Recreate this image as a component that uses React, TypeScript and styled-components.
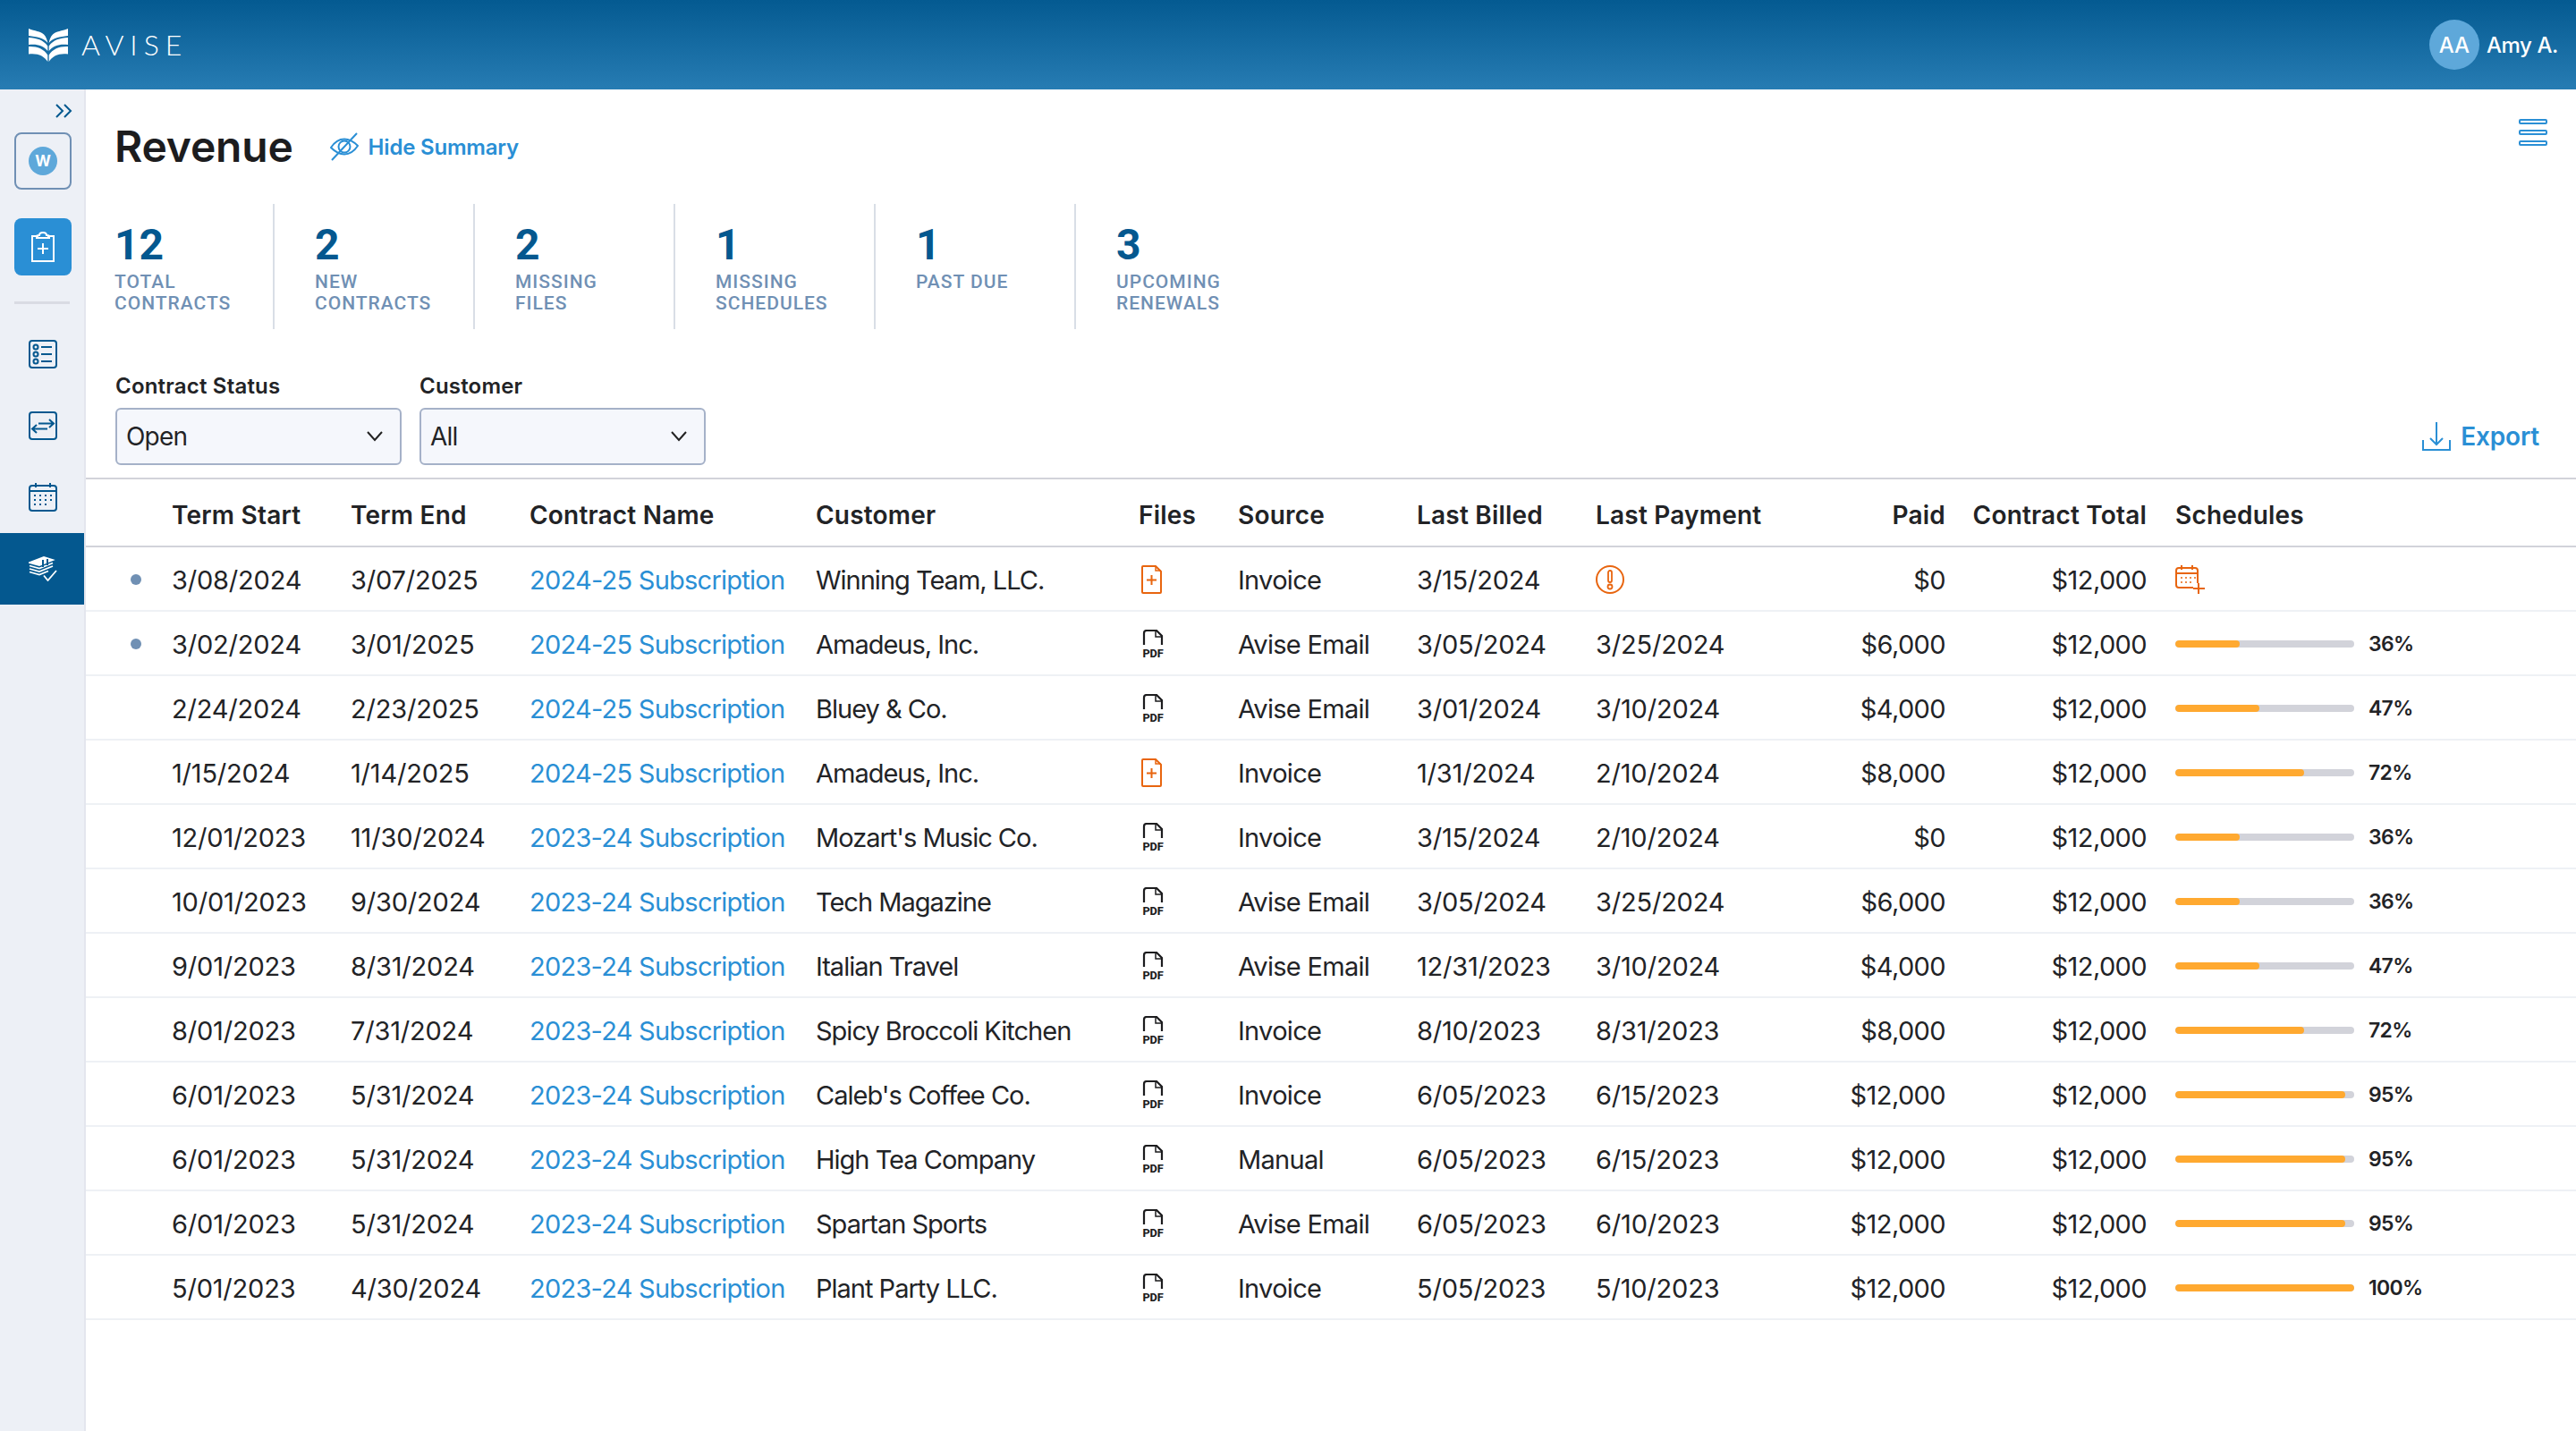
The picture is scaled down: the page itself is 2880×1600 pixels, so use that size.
import styled, { createGlobalStyle } from 'styled-components';

const blue = '#04588f';
const link = '#2a8fd5';
const orange = '#e8650f';
const slate = '#7090b4';
const ink = '#222326';

const GlobalStyle = createGlobalStyle`
  html, body {
    margin: 0;
    padding: 0;
    background: #fff;
  }
  body {
    font-family: Inter, "Liberation Sans", sans-serif;
    color: ${ink};
  }
`;

const Page = styled.div`
  display: flex;
  flex-direction: column;
  width: 2880px;
  height: 1600px;
  overflow: hidden;
`;

const TopBar = styled.header`
  display: flex;
  align-items: center;
  justify-content: space-between;
  height: 100px;
  padding: 0 20px 0 32px;
  box-sizing: border-box;
  background: linear-gradient(180deg, #045a91 0%, #277cb3 100%);
  color: #fff;
`;

const Brand = styled.div`
  display: flex;
  align-items: center;
  gap: 15px;
`;

const BrandName = styled.span`
  margin-top: -2px;
  font-family: Lato, sans-serif;
  font-weight: 300;
  font-size: 32px;
  letter-spacing: 7px;
`;

const UserBox = styled.div`
  display: flex;
  align-items: center;
  gap: 8px;
`;

const Avatar = styled.div`
  display: flex;
  align-items: center;
  justify-content: center;
  width: 56px;
  height: 56px;
  border-radius: 50%;
  background: #5ea8da;
  font-size: 24px;
  font-weight: 500;
`;

const UserName = styled.span`
  font-size: 24px;
  font-weight: 500;
  letter-spacing: -0.4px;
`;

const Body = styled.div`
  display: flex;
  flex: 1;
  min-height: 0;
`;

const Sidebar = styled.nav`
  display: flex;
  flex-direction: column;
  flex: none;
  width: 96px;
  box-sizing: border-box;
  background: #edf0f6;
  border-right: 2px solid #e4e6ee;
`;

const Collapse = styled.div`
  display: flex;
  justify-content: flex-end;
  height: 16px;
  margin-top: 16px;
  padding-right: 13px;
`;

const SideButton = styled.div<{ $active?: boolean; $top: number }>`
  display: flex;
  align-items: center;
  justify-content: center;
  width: 64px;
  height: 64px;
  margin: ${(p) => p.$top}px 0 0 16px;
  box-sizing: border-box;
  border-radius: 8px;
  background: ${(p) => (p.$active ? link : 'transparent')};
  border: ${(p) => (p.$active ? 'none' : `2px solid ${slate}`)};
`;

const WorkspaceDot = styled.div`
  display: flex;
  align-items: center;
  justify-content: center;
  width: 32px;
  height: 32px;
  border-radius: 50%;
  background: #5ea8da;
  color: #fff;
  font-size: 17px;
  font-weight: 700;
`;

const SideDivider = styled.div`
  height: 3px;
  margin: 29px 16px 16px;
  background: #d9dbe3;
`;

const NavItem = styled.div<{ $active?: boolean }>`
  display: flex;
  align-items: center;
  justify-content: center;
  height: 80px;
  padding-left: 2px;
  background: ${(p) => (p.$active ? blue : 'transparent')};
`;

const Main = styled.main`
  display: flex;
  flex-direction: column;
  flex: 1;
  min-width: 0;
`;

const TitleRow = styled.div`
  display: flex;
  align-items: center;
  padding: 36px 32px 0 32px;
`;

const Title = styled.h1`
  margin: 0 41px 0 0;
  font-size: 48px;
  line-height: 56px;
  font-weight: 600;
  letter-spacing: -0.2px;
  color: #1c1c1e;
`;

const LinkAction = styled.a<{ $size: number }>`
  display: flex;
  align-items: center;
  gap: 11px;
  color: ${link};
  font-size: ${(p) => p.$size}px;
  font-weight: 600;
  letter-spacing: -0.2px;
`;

const MenuButton = styled.div`
  display: flex;
  flex-direction: column;
  gap: 6px;
  margin: -3px 0 0 auto;
  align-self: flex-start;
`;

const MenuLine = styled.span`
  display: block;
  width: 32px;
  height: 6px;
  box-sizing: border-box;
  border: 2px solid ${link};
  border-radius: 2px;
`;

const Stats = styled.section`
  display: flex;
  margin: 36px 0 0 32px;
`;

const Stat = styled.div`
  width: 224px;
  height: 140px;
  box-sizing: border-box;
  padding: 18px 0 0 45px;
  border-right: 2px solid #d9dee6;
  font-family: Roboto, sans-serif;

  &:first-child {
    width: 179px;
    padding-left: 0;
  }
  &:last-child {
    border-right: none;
  }
`;

const StatValue = styled.div`
  font-size: 48px;
  line-height: 56px;
  font-weight: 700;
  color: ${blue};
`;

const StatLabel = styled.div`
  margin-top: 1px;
  font-size: 21px;
  line-height: 24px;
  font-weight: 500;
  letter-spacing: 1px;
  text-transform: uppercase;
  color: ${slate};
  white-space: pre-line;
`;

const Filters = styled.section`
  display: flex;
  align-items: flex-end;
  gap: 20px;
  margin-top: 50px;
  padding: 0 41px 14px 33px;
`;

const Field = styled.div`
  display: flex;
  flex-direction: column;
  gap: 10px;
`;

const FieldLabel = styled.label`
  font-size: 24px;
  line-height: 28px;
  font-weight: 600;
  letter-spacing: 0.2px;
`;

const Select = styled.div`
  display: flex;
  align-items: center;
  justify-content: space-between;
  width: 320px;
  height: 64px;
  box-sizing: border-box;
  padding: 0 18px 0 10px;
  background: #f5f7fc;
  border: 2px solid #a5b1c8;
  border-radius: 6px;
  font-size: 28px;
  letter-spacing: -0.8px;
`;

const Export = styled(LinkAction)`
  height: 64px;
  margin-left: auto;
`;

const Table = styled.section`
  border-top: 2px solid #d2d3da;
`;

const columns = '96px 200px 200px 320px 361px 111px 200px 200px 206px 185px 225px 1fr';

const HeadRow = styled.div`
  display: grid;
  grid-template-columns: ${columns};
  align-items: center;
  height: 76px;
  box-sizing: border-box;
  padding-top: 6px;
  border-bottom: 2px solid #d2d3da;
  font-size: 28px;
  font-weight: 600;
  letter-spacing: 0.2px;
`;

const DataRow = styled.div`
  display: grid;
  grid-template-columns: ${columns};
  align-items: center;
  height: 72px;
  box-sizing: border-box;
  padding-top: 2px;
  border-bottom: 2px solid #eef1f5;
  font-size: 29px;
  letter-spacing: -0.2px;
`;

const Cell = styled.div<{ $right?: boolean; $tracking?: number }>`
  display: flex;
  align-items: center;
  justify-content: ${(p) => (p.$right ? 'flex-end' : 'flex-start')};
  white-space: nowrap;
  ${(p) => (p.$tracking !== undefined ? `letter-spacing: ${p.$tracking}px;` : '')}
`;

const NewDot = styled.span`
  width: 12px;
  height: 12px;
  margin-left: 50px;
  border-radius: 50%;
  background: ${slate};
`;

const ContractLink = styled.a`
  color: ${link};
`;

const FileCell = styled(Cell)`
  padding-left: 2px;
`;

const ScheduleCell = styled(Cell)`
  padding-left: 32px;
`;

const Progress = styled.div`
  width: 200px;
  height: 8px;
  border-radius: 4px;
  background: #d2d3da;
  overflow: hidden;
`;

const ProgressFill = styled.div`
  height: 100%;
  border-radius: 4px;
  background: #ffa930;
`;

const Percent = styled.span`
  margin-left: 16px;
  font-size: 23px;
  font-weight: 600;
  letter-spacing: -0.7px;
`;

const Logo = () => {
  const wing = (
    <>
      <path d="M0 0C7 3 13 2.500 17 6.500C19.500 9 20.800 12.500 21.300 16C17 10.500 9 9 0 8Z" />
      <path d="M0 10C9 10.500 16.500 12.500 21.300 19.500V25C16.500 18.500 9 17 0 18Z" />
      <path d="M0 20C9 19.500 17 22.500 21.300 29.500V37C18 30.500 9 27 0 28.500Z" />
    </>
  );
  return (
    <svg width="44" height="37" viewBox="0 0 44 37" fill="#fff">
      {wing}
      <g transform="matrix(-1 0 0 1 44 0)">{wing}</g>
    </svg>
  );
};

const Chevrons = () => (
  <svg width="20" height="16" viewBox="0 0 20 16" fill="none" stroke={blue} strokeWidth="2">
    <path d="M2 1L9 8L2 15M11 1L18 8L11 15" />
  </svg>
);

const ClipboardPlus = () => (
  <svg width="26" height="34" viewBox="0 0 26 34" fill="none" stroke="#fff" strokeWidth="2">
    <path d="M8 5H1V33H25V5H18" />
    <path d="M6 7H20V5C20 4 18 4 17 4C17 2 15 1 13 1C11 1 9 2 9 4C8 4 6 4 6 5Z" />
    <path d="M13 13V25M7 19H19" />
  </svg>
);

const ListIcon = () => (
  <svg width="32" height="32" viewBox="0 0 32 32" fill="none" stroke={blue} strokeWidth="2">
    <rect x="1" y="1" width="30" height="30" rx="3" />
    <circle cx="8" cy="8" r="2.500" />
    <circle cx="8" cy="16" r="2.500" />
    <circle cx="8" cy="24" r="2.500" />
    <path d="M14 8H26M14 16H26M14 24H26" />
  </svg>
);

const SwapIcon = () => (
  <svg width="32" height="32" viewBox="0 0 32 32" fill="none" stroke={blue} strokeWidth="2">
    <rect x="1" y="1" width="30" height="30" rx="3" />
    <path d="M11 13.500H28M23 9L28 13.500L23 18" />
    <path d="M21 19.500H4M9 15L4 19.500L9 24" />
  </svg>
);

const CalendarIcon = () => (
  <svg width="32" height="32" viewBox="0 0 32 32" fill="none" stroke={blue} strokeWidth="2">
    <rect x="1" y="3" width="30" height="28" rx="3" />
    <path d="M1 9H31M8 0V5M24 0V5" />
    <path d="M6 14H8M12 14H14M18 14H20M24 14H26M6 19H8M12 19H14M18 19H20M24 19H26M6 24H8M12 24H14M18 24H20" />
  </svg>
);

const MoneyIcon = () => (
  <svg width="32" height="28" viewBox="0 0 32 28" fill="none" stroke="#fff" strokeWidth="1.800">
    <path d="M1 7L17 1L27 4L12 10Z" fill="#fff" />
    <path d="M1 10.500L12 13.500L27 7.500M1 14L12 17L27 11M1 17.500L12 20.500L22 16.500" />
    <path d="M16 4V12M21 3V10" stroke={blue} strokeWidth="2" />
    <path d="M17 21.500L21.500 27L31 16" />
  </svg>
);

const EyeOff = () => (
  <svg width="32" height="32" viewBox="0 0 32 32" fill="none" stroke={link} strokeWidth="2">
    <path d="M1 17C5 11 10 7.500 16 7.500C22 7.500 27 11 31 15C27 21 22 24.500 16 24.500C10 24.500 5 21 1 17Z" />
    <circle cx="16" cy="16" r="6.500" />
    <path d="M30 1L2 31" />
  </svg>
);

const ExportIcon = () => (
  <svg width="32" height="32" viewBox="0 0 32 32" fill="none" stroke={link} strokeWidth="2">
    <path d="M1 20V31H31V20" />
    <path d="M16 0V25M9 18L16 25L23 18" />
  </svg>
);

const Chevron = () => (
  <svg width="20" height="12" viewBox="0 0 20 12" fill="none" stroke="#222" strokeWidth="2">
    <path d="M2 1L10 10L18 1" />
  </svg>
);

const AddFile = () => (
  <svg width="26" height="32" viewBox="-1 0 26 32" fill="none" stroke={orange} strokeWidth="2">
    <path d="M1 2C1 1.500 1.500 1 2 1H16L22 7V30C22 30.500 21.500 31 21 31H2C1.500 31 1 30.500 1 30Z" />
    <path d="M16 1V6H22" strokeWidth="1.500" />
    <path d="M11.500 11V22M6 16.500H17" />
  </svg>
);

// wider than the drawn file so that the PDF caption has room on both sides
const PdfFile = () => (
  <svg width="32" height="32" viewBox="-2 0 32 32" fill="none" stroke="#1c1c1e" strokeWidth="2.200">
    <path d="M2 17V4C2 2 3 1 5 1H16L22 7V17" />
    <path d="M15 1V8H22" strokeWidth="1.500" />
    <text
      x="0.500"
      y="30.500"
      fontFamily="Roboto, sans-serif"
      fontSize="13"
      fontWeight="800"
      textLength="23"
      lengthAdjust="spacingAndGlyphs"
      fill="#1c1c1e"
      stroke="none"
    >
      PDF
    </text>
  </svg>
);

const AlertIcon = () => (
  <svg width="32" height="32" viewBox="0 0 32 32" fill="none" stroke={orange} strokeWidth="2">
    <circle cx="16" cy="16" r="15" />
    <rect x="14" y="6" width="4" height="13" rx="2" strokeWidth="1.800" />
    <circle cx="16" cy="24" r="2.500" strokeWidth="1.800" />
  </svg>
);

const CalendarAdd = () => (
  <svg width="34" height="32" viewBox="0 0 34 32" fill="none" stroke={orange} strokeWidth="2">
    <path d="M20 25H4C2 25 1 24 1 22V6C1 4 2 3 4 3H22C24 3 25 4 25 6V20" />
    <path d="M1 9H25M7 0V5M19 0V5" />
    <path d="M6 14H8M11 14H13M16 14H18M21 14H23M6 19H8M11 19H13M16 19H18" strokeWidth="1.500" />
    <path d="M26 20V32M20 26H33" />
  </svg>
);

const stats = [
  { value: '12', label: 'Total\nContracts' },
  { value: '2', label: 'New\nContracts' },
  { value: '2', label: 'Missing\nFiles' },
  { value: '1', label: 'Missing\nSchedules' },
  { value: '1', label: 'Past Due' },
  { value: '3', label: 'Upcoming\nRenewals' },
];

type Contract = {
  isNew?: boolean;
  start: string;
  end: string;
  name: string;
  customer: string;
  addFile?: boolean;
  source: string;
  billed: string;
  payment?: string;
  paid: string;
  progress?: number;
};

const contracts: Contract[] = [
  { isNew: true, start: '3/08/2024', end: '3/07/2025', name: '2024-25 Subscription', customer: 'Winning Team, LLC.', addFile: true, source: 'Invoice', billed: '3/15/2024', paid: '$0' },
  { isNew: true, start: '3/02/2024', end: '3/01/2025', name: '2024-25 Subscription', customer: 'Amadeus, Inc.', source: 'Avise Email', billed: '3/05/2024', payment: '3/25/2024', paid: '$6,000', progress: 36 },
  { start: '2/24/2024', end: '2/23/2025', name: '2024-25 Subscription', customer: 'Bluey & Co.', source: 'Avise Email', billed: '3/01/2024', payment: '3/10/2024', paid: '$4,000', progress: 47 },
  { start: '1/15/2024', end: '1/14/2025', name: '2024-25 Subscription', customer: 'Amadeus, Inc.', addFile: true, source: 'Invoice', billed: '1/31/2024', payment: '2/10/2024', paid: '$8,000', progress: 72 },
  { start: '12/01/2023', end: '11/30/2024', name: '2023-24 Subscription', customer: "Mozart's Music Co.", source: 'Invoice', billed: '3/15/2024', payment: '2/10/2024', paid: '$0', progress: 36 },
  { start: '10/01/2023', end: '9/30/2024', name: '2023-24 Subscription', customer: 'Tech Magazine', source: 'Avise Email', billed: '3/05/2024', payment: '3/25/2024', paid: '$6,000', progress: 36 },
  { start: '9/01/2023', end: '8/31/2024', name: '2023-24 Subscription', customer: 'Italian Travel', source: 'Avise Email', billed: '12/31/2023', payment: '3/10/2024', paid: '$4,000', progress: 47 },
  { start: '8/01/2023', end: '7/31/2024', name: '2023-24 Subscription', customer: 'Spicy Broccoli Kitchen', source: 'Invoice', billed: '8/10/2023', payment: '8/31/2023', paid: '$8,000', progress: 72 },
  { start: '6/01/2023', end: '5/31/2024', name: '2023-24 Subscription', customer: "Caleb's Coffee Co.", source: 'Invoice', billed: '6/05/2023', payment: '6/15/2023', paid: '$12,000', progress: 95 },
  { start: '6/01/2023', end: '5/31/2024', name: '2023-24 Subscription', customer: 'High Tea Company', source: 'Manual', billed: '6/05/2023', payment: '6/15/2023', paid: '$12,000', progress: 95 },
  { start: '6/01/2023', end: '5/31/2024', name: '2023-24 Subscription', customer: 'Spartan Sports', source: 'Avise Email', billed: '6/05/2023', payment: '6/10/2023', paid: '$12,000', progress: 95 },
  { start: '5/01/2023', end: '4/30/2024', name: '2023-24 Subscription', customer: 'Plant Party LLC.', source: 'Invoice', billed: '5/05/2023', payment: '5/10/2023', paid: '$12,000', progress: 100 },
];

const App = () => (
  <Page>
    <GlobalStyle />
    <TopBar>
      <Brand>
        <Logo />
        <BrandName>AVISE</BrandName>
      </Brand>
      <UserBox>
        <Avatar>AA</Avatar>
        <UserName>Amy A.</UserName>
      </UserBox>
    </TopBar>
    <Body>
      <Sidebar>
        <Collapse>
          <Chevrons />
        </Collapse>
        <SideButton $top={16}>
          <WorkspaceDot>W</WorkspaceDot>
        </SideButton>
        <SideButton $top={32} $active>
          <ClipboardPlus />
        </SideButton>
        <SideDivider />
        <NavItem>
          <ListIcon />
        </NavItem>
        <NavItem>
          <SwapIcon />
        </NavItem>
        <NavItem>
          <CalendarIcon />
        </NavItem>
        <NavItem $active>
          <MoneyIcon />
        </NavItem>
      </Sidebar>
      <Main>
        <TitleRow>
          <Title>Revenue</Title>
          <LinkAction $size={24}>
            <EyeOff />
            Hide Summary
          </LinkAction>
          <MenuButton>
            <MenuLine />
            <MenuLine />
            <MenuLine />
          </MenuButton>
        </TitleRow>
        <Stats>
          {stats.map((s) => (
            <Stat key={s.label}>
              <StatValue>{s.value}</StatValue>
              <StatLabel>{s.label}</StatLabel>
            </Stat>
          ))}
        </Stats>
        <Filters>
          <Field>
            <FieldLabel>Contract Status</FieldLabel>
            <Select>
              Open
              <Chevron />
            </Select>
          </Field>
          <Field>
            <FieldLabel>Customer</FieldLabel>
            <Select>
              All
              <Chevron />
            </Select>
          </Field>
          <Export $size={28}>
            <ExportIcon />
            Export
          </Export>
        </Filters>
        <Table>
          <HeadRow>
            <Cell />
            <Cell>Term Start</Cell>
            <Cell>Term End</Cell>
            <Cell>Contract Name</Cell>
            <Cell>Customer</Cell>
            <Cell>Files</Cell>
            <Cell>Source</Cell>
            <Cell>Last Billed</Cell>
            <Cell>Last Payment</Cell>
            <Cell $right>Paid</Cell>
            <Cell $right>Contract Total</Cell>
            <ScheduleCell>Schedules</ScheduleCell>
          </HeadRow>
          {contracts.map((c) => (
            <DataRow key={c.start + c.customer}>
              <Cell>{c.isNew && <NewDot />}</Cell>
              <Cell>{c.start}</Cell>
              <Cell>{c.end}</Cell>
              <Cell $tracking={-0.75}>
                <ContractLink>{c.name}</ContractLink>
              </Cell>
              <Cell $tracking={-1}>{c.customer}</Cell>
              <FileCell>{c.addFile ? <AddFile /> : <PdfFile />}</FileCell>
              <Cell $tracking={-0.7}>{c.source}</Cell>
              <Cell>{c.billed}</Cell>
              <Cell>{c.payment ?? <AlertIcon />}</Cell>
              <Cell $right $tracking={-0.6}>
                {c.paid}
              </Cell>
              <Cell $right $tracking={-0.6}>
                $12,000
              </Cell>
              <ScheduleCell>
                {c.progress === undefined ? (
                  <CalendarAdd />
                ) : (
                  <>
                    <Progress>
                      <ProgressFill style={{ width: `${c.progress}%` }} />
                    </Progress>
                    <Percent>{c.progress}%</Percent>
                  </>
                )}
              </ScheduleCell>
            </DataRow>
          ))}
        </Table>
      </Main>
    </Body>
  </Page>
);

export default App;
